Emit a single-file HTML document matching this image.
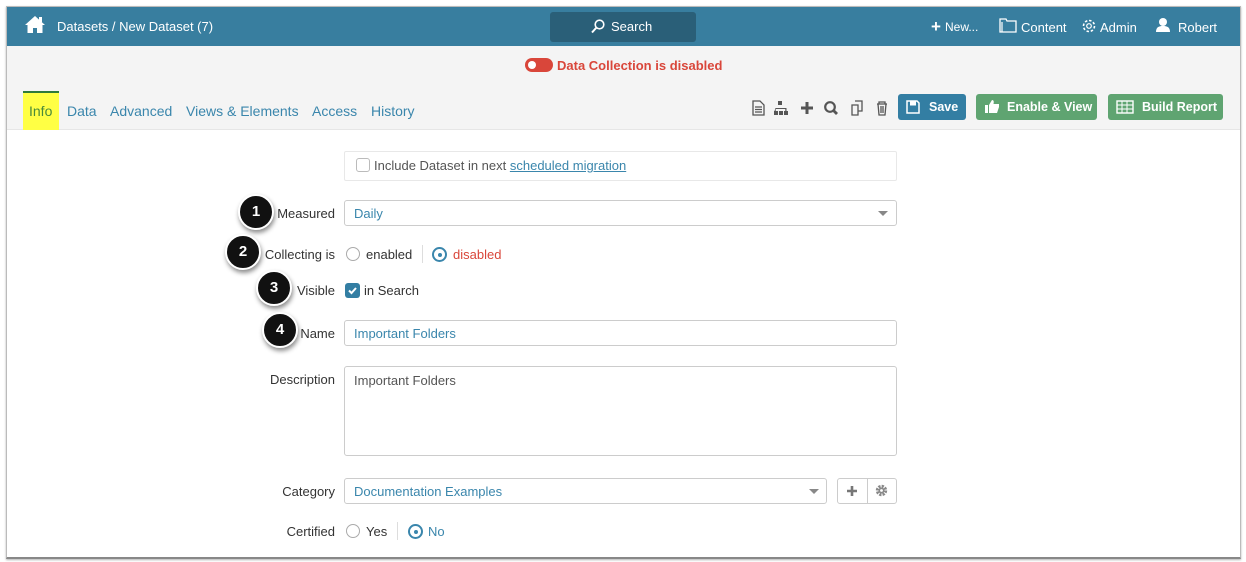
<!DOCTYPE html>
<html><head><meta charset="utf-8"><style>
*{box-sizing:border-box;margin:0;padding:0}
body{width:1246px;height:562px;background:#fff;font-family:"Liberation Sans",Arial,sans-serif;font-size:13px;position:relative;overflow:hidden;color:#333}
.a{position:absolute}
.frame{left:6px;top:6px;width:1235px;height:553px;border:1px solid #bbb;border-bottom:2px solid #888;box-shadow:0 1px 2px rgba(0,0,0,.3)}
.hdr{left:7px;top:7px;width:1233px;height:39px;background:#387e9f}
.gray{left:7px;top:46px;width:1233px;height:84px;background:#f4f4f4;border-bottom:1px solid #e6e6e6}
.w{color:#fff;font-size:13px}
.tab{color:#3a86ac;font-size:14px;top:103px}
.lbl{color:#333;font-size:13px;text-align:right;width:140px;left:195px}
.inp{border:1px solid #ccc;border-radius:3px;background:#fff;left:344px;width:553px}
.blue{color:#3a86ac}
.btn{top:94px;height:26px;border-radius:3px;color:#fff;font-weight:bold;font-size:12.5px;line-height:26px}
.num{width:36px;height:36px;border-radius:50%;background:#111;color:#fff;font-size:15px;font-weight:bold;text-align:center;line-height:32px;border:2px solid #fff;box-shadow:1px 3px 5px rgba(0,0,0,.45)}
.radio{width:14px;height:14px;border-radius:50%;border:1px solid #aaa;background:#fff}
.rsel{width:15px;height:15px;border-radius:50%;border:2px solid #3a86ac;background:#fff}
.rsel::after{content:"";position:absolute;left:3.5px;top:3.5px;width:4px;height:4px;border-radius:50%;background:#3a86ac}
.caret{width:0;height:0;border-left:5px solid transparent;border-right:5px solid transparent;border-top:5px solid #888}
</style></head><body>
<div class="a frame"></div>
<div class="a hdr"></div>
<svg class="a" style="left:24px;top:15px" width="22" height="19" viewBox="0 0 22 19"><path d="M11 1 L1 10 L3.5 10 L3.5 18 L9 18 L9 13 L13 13 L13 18 L18.5 18 L18.5 10 L21 10 Z" fill="#fff"/><rect x="15" y="2" width="3" height="5" fill="#fff"/></svg>
<div class="a w" style="left:57px;top:19px">Datasets / New Dataset (7)</div>
<div class="a" style="left:550px;top:12px;width:146px;height:30px;background:#2a5f78;border-radius:3px"></div>
<svg class="a" style="left:591px;top:19px" width="14" height="15" viewBox="0 0 14 15"><circle cx="8.5" cy="5.5" r="4.3" fill="none" stroke="#fff" stroke-width="1.6"/><path d="M5.5 8.5 L1 13.5" stroke="#fff" stroke-width="2"/></svg>
<div class="a w" style="left:611px;top:19px">Search</div>
<div class="a w" style="left:931px;top:17px;font-weight:bold;font-size:17px">+</div>
<div class="a w" style="left:945px;top:20px;font-size:12px">New...</div>
<svg class="a" style="left:999px;top:18px" width="18" height="15" viewBox="0 0 18 15"><path d="M1 1h6l1 2h9v11H1z" fill="none" stroke="#fff" stroke-width="1.3"/><path d="M3 4v10" stroke="#fff" stroke-width="1.2"/></svg>
<div class="a w" style="left:1021px;top:20px">Content</div>
<svg class="a" style="left:1081px;top:18px" width="16" height="16" viewBox="0 0 16 16"><circle cx="8" cy="8" r="5.5" fill="none" stroke="#fff" stroke-width="1.6" stroke-dasharray="2.5 1.8"/><circle cx="8" cy="8" r="2.3" fill="none" stroke="#fff" stroke-width="1.2"/></svg>
<div class="a w" style="left:1100px;top:20px">Admin</div>
<svg class="a" style="left:1155px;top:17px" width="16" height="16" viewBox="0 0 16 16"><circle cx="8" cy="5" r="4" fill="#fff"/><path d="M1 15c0-5 3-6 7-6s7 1 7 6z" fill="#fff"/></svg>
<div class="a w" style="left:1178px;top:20px">Robert</div>

<div class="a gray"></div>
<div class="a" style="left:525px;top:58px;width:28px;height:14px;border-radius:7px;background:#d9463a"></div>
<div class="a" style="left:528px;top:61px;width:8px;height:8px;border-radius:50%;background:#fff"></div>
<div class="a" style="left:557px;top:58px;color:#d9463a;font-weight:bold;font-size:13px">Data Collection is disabled</div>

<div class="a" style="left:23px;top:91px;width:36px;height:39px;background:#ffff44;border-top:2px solid #2f7a3a"></div>
<div class="a tab" style="left:29px;color:#4a8a3a">Info</div>
<div class="a tab" style="left:67px">Data</div>
<div class="a tab" style="left:110px">Advanced</div>
<div class="a tab" style="left:186px">Views &amp; Elements</div>
<div class="a tab" style="left:312px">Access</div>
<div class="a tab" style="left:371px">History</div>

<svg class="a" style="left:750px;top:99px" width="140" height="18" viewBox="0 0 140 18">
<g fill="none" stroke="#555" stroke-width="1.3"><path d="M3 2h7l4 4v10H3z"/><path d="M5 8h7M5 10.5h7M5 13h7"/></g>
<g fill="#555"><rect x="28" y="2" width="4" height="4"/><rect x="24" y="12" width="4" height="4"/><rect x="29" y="12" width="4" height="4"/><rect x="34" y="12" width="4" height="4"/><path d="M29.5 6v3M25.5 9h11v3h-1.2v-2h-9.6v2h-1.2z"/></g>
<path d="M57 3v12M51 9h12" stroke="#555" stroke-width="3"/>
<circle cx="80" cy="8" r="4.8" fill="none" stroke="#555" stroke-width="2.2"/><path d="M83.5 11.5 L87 15" stroke="#555" stroke-width="2.8"/>
<g fill="none" stroke="#555" stroke-width="1.3"><path d="M102 6h6v10h-6z"/><path d="M105 2h7v10h-4"/></g>
<g fill="none" stroke="#555" stroke-width="1.3"><path d="M127 5h10M129 5V3h6v2M128 5l1 11h6l1-11M131 7v7M133 7v7"/></g>
</svg>

<div class="a btn" style="left:898px;width:68px;background:#337ea3"></div>
<svg class="a" style="left:906px;top:100px" width="14" height="14" viewBox="0 0 14 14"><path d="M1 1h10l2 2v10H1z" fill="none" stroke="#fff" stroke-width="1.5"/><rect x="4" y="1.5" width="6" height="4" fill="#fff"/></svg>
<div class="a btn" style="left:929px">Save</div>
<div class="a btn" style="left:976px;width:121px;background:#5fa471"></div>
<svg class="a" style="left:984px;top:99px" width="16" height="15" viewBox="0 0 16 15"><rect x="1" y="6" width="3" height="8" fill="#fff"/><path d="M5 6l3-5c2 0 2 2 1.5 4H15v3l-2 6H5z" fill="#fff"/></svg>
<div class="a btn" style="left:1007px">Enable &amp; View</div>
<div class="a btn" style="left:1108px;width:115px;background:#5fa471"></div>
<svg class="a" style="left:1116px;top:100px" width="18" height="14" viewBox="0 0 18 14"><rect x="1" y="1" width="16" height="12" fill="none" stroke="#fff" stroke-width="1.4"/><path d="M1 5h16M1 9h16M6 1v12M11 1v12" stroke="#fff" stroke-width="1"/></svg>
<div class="a btn" style="left:1142px">Build Report</div>

<div class="a" style="left:344px;top:151px;width:553px;height:30px;border:1px solid #e8e8e8;border-radius:2px"></div>
<div class="a" style="left:356px;top:158px;width:14px;height:14px;border:1px solid #bbb;border-radius:3px"></div>
<div class="a" style="left:374px;top:158px;color:#555">Include Dataset in next <span style="color:#3a86ac;text-decoration:underline">scheduled migration</span></div>

<div class="a lbl" style="top:206px">Measured</div>
<div class="a inp" style="top:200px;height:26px"></div>
<div class="a blue" style="left:354px;top:206px">Daily</div>
<div class="a caret" style="left:878px;top:211px"></div>
<div class="a num" style="left:238px;top:194px">1</div>

<div class="a lbl" style="top:247px">Collecting is</div>
<div class="a radio" style="left:346px;top:247px"></div>
<div class="a" style="left:366px;top:247px;color:#333">enabled</div>
<div class="a" style="left:422px;top:245px;width:1px;height:18px;background:#ddd"></div>
<div class="a rsel" style="left:432px;top:247px"></div>
<div class="a" style="left:453px;top:247px;color:#d9463a">disabled</div>
<div class="a num" style="left:225px;top:234px">2</div>

<div class="a lbl" style="top:283px">Visible</div>
<div class="a" style="left:345px;top:283px;width:15px;height:15px;background:#337ea3;border-radius:3px"></div>
<svg class="a" style="left:347px;top:285px" width="11" height="11" viewBox="0 0 11 11"><path d="M2 5.5l2.5 2.5L9 3" fill="none" stroke="#fff" stroke-width="2"/></svg>
<div class="a" style="left:364px;top:283px">in Search</div>
<div class="a num" style="left:256px;top:270px">3</div>

<div class="a lbl" style="top:326px">Name</div>
<div class="a inp" style="top:320px;height:26px"></div>
<div class="a blue" style="left:354px;top:326px">Important Folders</div>
<div class="a num" style="left:262px;top:312px">4</div>

<div class="a lbl" style="top:372px">Description</div>
<div class="a inp" style="top:366px;height:90px"></div>
<div class="a" style="left:354px;top:373px;color:#555">Important Folders</div>

<div class="a lbl" style="top:484px">Category</div>
<div class="a inp" style="top:478px;height:26px;width:483px"></div>
<div class="a blue" style="left:354px;top:484px">Documentation Examples</div>
<div class="a caret" style="left:809px;top:489px"></div>
<div class="a" style="left:837px;top:478px;width:60px;height:26px;border:1px solid #ccc;border-radius:3px"></div>
<div class="a" style="left:867px;top:478px;width:1px;height:26px;background:#ccc"></div>
<svg class="a" style="left:846px;top:485px" width="12" height="12" viewBox="0 0 12 12"><path d="M6 1v10M1 6h10" stroke="#777" stroke-width="2.6"/></svg>
<svg class="a" style="left:875px;top:484px" width="13" height="13" viewBox="0 0 13 13"><circle cx="6.5" cy="6.5" r="4.2" fill="none" stroke="#888" stroke-width="3" stroke-dasharray="2.2 1.1"/><circle cx="6.5" cy="6.5" r="3" fill="#888"/><circle cx="6.5" cy="6.5" r="1.4" fill="#fff"/></svg>

<div class="a lbl" style="top:524px">Certified</div>
<div class="a radio" style="left:346px;top:524px"></div>
<div class="a" style="left:366px;top:524px">Yes</div>
<div class="a" style="left:397px;top:522px;width:1px;height:18px;background:#ddd"></div>
<div class="a rsel" style="left:408px;top:524px"></div>
<div class="a blue" style="left:428px;top:524px">No</div>
</body></html>
